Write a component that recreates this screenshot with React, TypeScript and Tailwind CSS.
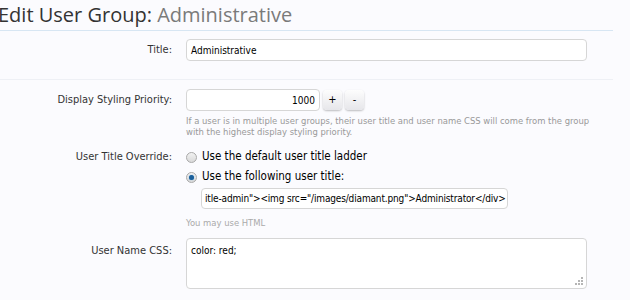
import React from "react";

function Radio({ checked }: { checked?: boolean }) {
  return (
    <span className="relative inline-flex h-[11px] w-[11px] shrink-0 items-center justify-center rounded-full border border-[#a9a9a9] bg-gradient-to-b from-[#f2f2f2] to-[#d9d9d9]">
      {checked && <span className="h-[5px] w-[5px] rounded-full bg-[#1c5f9a] shadow-[0_0_1px_#4aa0e0]" />}
    </span>
  );
}

export default function App() {
  const font = { fontFamily: "'DejaVu Sans Condensed', 'DejaVu Sans', sans-serif" };
  return (
    <div className="h-[300px] w-[630px] overflow-hidden bg-[#fbfbfe] text-[#333]" style={font}>
      <h1 className="ml-[-2px] h-[30px] pt-[2px] text-[20px] leading-[26px]" style={{ fontFamily: "'Open Sans', sans-serif" }}>
        <span className="text-[#333]">Edit User Group:</span> <span className="text-[#7a7a7a]">Administrative</span>
      </h1>
      <div className="w-[613px] border-t border-[#d7e6f3]" />
      <div className="grid w-[613px] grid-cols-[172px_1fr] gap-x-[14px] border-b border-[#eef0f5] pb-[18px] pt-[8px]">
        <div className="pt-[3px] text-right text-[11px] leading-[16px]">Title:</div>
        <div className="flex h-[22px] w-[401px] items-center rounded-[4px] border border-[#d6d6d6] bg-white px-[4px] text-[10px] text-black">Administrative</div>
      </div>
      <div className="grid w-[613px] grid-cols-[172px_1fr] gap-x-[14px] pt-[9px]">
        <div className="pt-[3px] text-right text-[11px] leading-[16px]">Display Styling Priority:</div>
        <div>
          <div className="flex items-center gap-[3px]">
            <div className="flex h-[22px] w-[134px] items-center justify-end rounded-[4px] border border-[#d6d6d6] bg-white px-[4px] text-[10px] text-black">1000</div>
            <div className="flex h-[20px] w-[19px] items-center justify-center rounded-[4px] bg-gradient-to-b from-[#fdfdfd] to-[#e6e6ea] text-[11px] text-black shadow-[0_1px_2px_rgba(0,0,0,0.25)]">+</div>
            <div className="flex h-[20px] w-[19px] items-center justify-center rounded-[4px] bg-gradient-to-b from-[#fdfdfd] to-[#e6e6ea] text-[11px] text-black shadow-[0_1px_2px_rgba(0,0,0,0.25)]">-</div>
          </div>
          <p className="mt-[4px] whitespace-nowrap text-[9.4px] leading-[11px] text-[#999]">
            If a user is in multiple user groups, their user title and user name CSS will come from the group
            <br />
            with the highest display styling priority.
          </p>
        </div>
        <div className="pt-[12px] text-right text-[11px] leading-[16px]">User Title Override:</div>
        <div className="pt-[12px]">
          <label className="flex h-[16px] items-center gap-[5px] text-[11.5px] text-black">
            <Radio /> Use the default user title ladder
          </label>
          <label className="mt-[4px] flex h-[16px] items-center gap-[5px] text-[11.5px] text-black">
            <Radio checked /> Use the following user title:
          </label>
          <div className="ml-[15px] mt-[3px] flex h-[21px] w-[307px] items-center overflow-hidden whitespace-nowrap rounded-[4px] border border-[#d6d6d6] bg-white pl-[3px] text-[10px] tracking-[-0.15px] text-black">
            itle-admin"&gt;&lt;img src="/images/diamant.png"&gt;Administrator&lt;/div&gt;
          </div>
          <p className="mt-[8px] text-[9.4px] leading-[12px] text-[#aaa]">You may use HTML</p>
        </div>
        <div className="pt-[14px] text-right text-[11px] leading-[16px]">User Name CSS:</div>
        <div className="pt-[9px]">
          <div className="relative h-[51px] w-[401px] rounded-[4px] border border-[#d6d6d6] bg-white px-[4px] pt-[4px] text-[10px] text-black">
            color: red;
            <svg className="absolute bottom-[2px] right-[2px]" width="9" height="9" viewBox="0 0 9 9">
              <g fill="#b5b5b5">
                <rect x="6" y="0" width="2" height="2" />
                <rect x="3" y="3" width="2" height="2" />
                <rect x="6" y="3" width="2" height="2" />
                <rect x="0" y="6" width="2" height="2" />
                <rect x="3" y="6" width="2" height="2" />
                <rect x="6" y="6" width="2" height="2" />
              </g>
            </svg>
          </div>
        </div>
      </div>
    </div>
  );
}
